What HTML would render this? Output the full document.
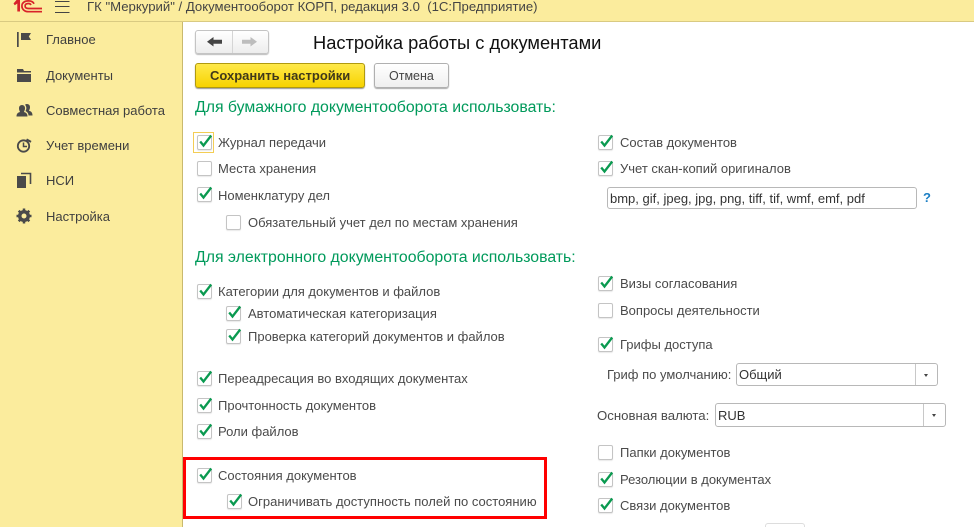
<!DOCTYPE html>
<html lang="ru"><head><meta charset="utf-8"><title>Настройка работы с документами</title>
<style>
html,body{margin:0;padding:0;width:974px;height:527px;overflow:hidden;background:#fff}
body{position:relative;font-family:"Liberation Sans",Arial,sans-serif;font-size:13px;color:#4a4a4a}
div,span,svg{position:absolute}
.t{line-height:16px;white-space:nowrap}
.n{left:46px;color:#3f3f3f;font-size:13px}
.h{left:195px;color:#009a5b;font-size:15.84px;line-height:18px;white-space:nowrap}
.c{width:13px;height:13px;border:1px solid #c4c4c4;border-radius:2px;background:#fff;box-shadow:0 1px 1px #e8e8e8}
.c svg{left:0;top:-4px;width:17px;height:17px;overflow:visible}
.f{height:20px;border:1px solid #b8b8b8;border-radius:3px;background:#fff;color:#333;line-height:21px;padding-left:2px;white-space:nowrap;box-sizing:content-box}
.ar{top:0;bottom:0;right:0;width:21px;border-left:1px solid #c8c8c8}
.ar:after{content:"";position:absolute;left:8px;top:10px;border:2.5px solid transparent;border-top:3px solid #444;border-bottom:0}
</style></head><body>
<svg width="0" height="0" style="left:0;top:0"><defs><symbol id="k" viewBox="0 0 17 17"><path d="M2.200 9.500 5.500 13.500 13.200 3.500" fill="none" stroke="#0a9a50" stroke-width="2.300"/></symbol></defs></svg>

<div style="left:0;top:0;width:974px;height:22px;background:#fbec9d;border-bottom:1px solid #d9ca82;box-sizing:border-box"></div>
<div style="left:0;top:22px;width:182px;height:505px;background:#fbec9d;border-right:1px solid #c9b96e"></div>

<svg style="left:13px;top:0" width="30" height="13" viewBox="0 0 30 13"><path d="M0.500 3.500 3.500 0H7V11.500H4.300V3.500L1.800 5.200Z" fill="#d8232a"/><g fill="none" stroke="#d8232a" stroke-width="1.700"><path d="M21 3.800C20 1.500 18 .9 15.500 .9 11.300 .9 8.900 3 8.900 6S11.300 11.700 15.500 11.700H29"/><path d="M18 5C17.500 3.900 16.500 3.500 15.500 3.500 13.300 3.500 12.100 4.500 12.100 6S13.300 8.500 15.500 8.500H29"/></g></svg>
<svg style="left:55px;top:0" width="16" height="14" viewBox="0 0 16 14"><path d="M0 1.500H14.500M0 6.500H14.500M0 12.500H14.500" stroke="#444" stroke-width="1"/></svg>
<div class="t" style="left:87px;top:-1px;font-size:13.17px;color:#444">ГК "Меркурий" / Документооборот КОРП, редакция 3.0 &nbsp;(1С:Предприятие)</div>

<svg style="left:16px;top:32px" width="16" height="16" viewBox="0 0 16 16"><path d="M1 0H2.700V15H1Z" fill="#4a4a4a"/><path d="M5 1H15L12.800 4.500 15 8H5Z" fill="#4a4a4a"/></svg>
<div class="t n" style="top:32px">Главное</div>
<svg style="left:16px;top:67px" width="16" height="16" viewBox="0 0 16 16"><path d="M1 2H7L8 4H15V5.500H1ZM1 7H15V15H1Z" fill="#4a4a4a"/></svg>
<div class="t n" style="top:68px">Документы</div>
<svg style="left:16px;top:102px" width="17" height="16" viewBox="0 0 17 16"><path d="M6 3a3 3 0 0 1 3 3.500c0 1.500-.8 2.500-1 3.500 2 .6 3.500 1.500 3.500 4.500H0.500c0-3 1.500-3.900 3.500-4.500-.3-1-1-2-1-3.500A3 3 0 0 1 6 3Z" fill="#4a4a4a"/><path d="M11 2a3 3 0 0 1 3 3.500c0 1.500-.8 2.500-1 3.300 2 .6 3.500 1.600 3.500 4.700H12.500c0-2-1-3.500-3-4.500.5-1 1-2 .8-3.500-.1-1-.5-2-1.300-2.800.6-.4 1.300-.7 2-.7Z" fill="#4a4a4a"/></svg>
<div class="t n" style="top:103px">Совместная работа</div>
<svg style="left:16px;top:137px" width="17" height="17" viewBox="0 0 17 17"><circle cx="7.500" cy="9" r="5.700" fill="none" stroke="#4a4a4a" stroke-width="1.800"/><path d="M7.500 5.500V9.500H11" fill="none" stroke="#4a4a4a" stroke-width="1.500"/><path d="M11 1.500 15.500 4 14.500 5.800 10 3.300Z" fill="#4a4a4a"/></svg>
<div class="t n" style="top:138px">Учет времени</div>
<svg style="left:16px;top:172px" width="16" height="17" viewBox="0 0 16 17"><path d="M1 4H10V16H1Z" fill="#4a4a4a"/><path d="M5 1.500H14.500V12" fill="none" stroke="#4a4a4a" stroke-width="1.600"/></svg>
<div class="t n" style="top:173px">НСИ</div>
<svg style="left:16px;top:208px" width="16" height="16" viewBox="0 0 16 16"><circle cx="8" cy="8" r="4.500" fill="none" stroke="#4a4a4a" stroke-width="3"/><path d="M8 0.500V15.500M0.500 8H15.500M2.700 2.700 13.300 13.300M13.300 2.700 2.700 13.300" stroke="#4a4a4a" stroke-width="2.500"/><circle cx="8" cy="8" r="2.500" fill="#fbec9d"/></svg>
<div class="t n" style="top:209px">Настройка</div>

<div style="left:195px;top:30px;width:72px;height:22px;border:1px solid #c4c4c4;border-radius:3px;background:linear-gradient(#fff,#ededed);box-shadow:0 1px 1px #bbb"></div>
<div style="left:232px;top:31px;width:1px;height:22px;background:#d5d5d5"></div>
<svg style="left:207px;top:36px" width="16" height="12" viewBox="0 0 16 12"><path d="M0 5.700 6.500 1V3.700H15V7.700H6.500V10.500Z" fill="#444"/></svg>
<svg style="left:242px;top:36px" width="16" height="12" viewBox="0 0 16 12"><path d="M15 5.700 8.500 1V3.700H0V7.700H8.500V10.500Z" fill="#bdbdbd"/></svg>
<div class="t" style="left:313px;top:32px;font-size:18.3px;line-height:21px;color:#111">Настройка работы с документами</div>

<div style="left:195px;top:63px;width:168px;height:23px;border:1px solid #b09a10;border-radius:3px;background:linear-gradient(#ffe94a,#f7d300);box-shadow:0 1px 1px #999"></div>
<div class="t" style="left:210px;top:68px;font-weight:bold;font-size:13px;color:#40391a">Сохранить настройки</div>
<div style="left:374px;top:63px;width:73px;height:23px;border:1px solid #b0b0b0;border-radius:3px;background:linear-gradient(#fff,#efefef);box-shadow:0 1px 1px #aaa"></div>
<div class="t" style="left:389px;top:68px;font-size:12.5px;color:#444">Отмена</div>

<div class="h" style="top:99px">Для бумажного документооборота использовать:</div>
<div class="h" style="top:249px">Для электронного документооборота использовать:</div>

<div style="left:193px;top:132px;width:19px;height:19px;border:1px solid #f3cd55"></div>
<div class="c" style="left:197px;top:135px"><svg><use href="#k"/></svg></div><div class="t" style="left:218px;top:135px">Журнал передачи</div>
<div class="c" style="left:197px;top:161px"></div><div class="t" style="left:218px;top:161px">Места хранения</div>
<div class="c" style="left:197px;top:187px"><svg><use href="#k"/></svg></div><div class="t" style="left:218px;top:188px">Номенклатуру дел</div>
<div class="c" style="left:226px;top:215px"></div><div class="t" style="left:248px;top:215px">Обязательный учет дел по местам хранения</div>

<div class="c" style="left:197px;top:284px"><svg><use href="#k"/></svg></div><div class="t" style="left:218px;top:284px">Категории для документов и файлов</div>
<div class="c" style="left:226px;top:306px"><svg><use href="#k"/></svg></div><div class="t" style="left:248px;top:306px">Автоматическая категоризация</div>
<div class="c" style="left:226px;top:329px"><svg><use href="#k"/></svg></div><div class="t" style="left:248px;top:329px">Проверка категорий документов и файлов</div>
<div class="c" style="left:197px;top:371px"><svg><use href="#k"/></svg></div><div class="t" style="left:218px;top:371px">Переадресация во входящих документах</div>
<div class="c" style="left:197px;top:398px"><svg><use href="#k"/></svg></div><div class="t" style="left:218px;top:398px">Прочтонность документов</div>
<div class="c" style="left:197px;top:424px"><svg><use href="#k"/></svg></div><div class="t" style="left:218px;top:424px">Роли файлов</div>
<div class="c" style="left:197px;top:468px"><svg><use href="#k"/></svg></div><div class="t" style="left:218px;top:468px">Состояния документов</div>
<div class="c" style="left:227px;top:494px"><svg><use href="#k"/></svg></div><div class="t" style="left:248px;top:494px;font-size:13.03px">Ограничивать доступность полей по состоянию</div>

<div style="left:183px;top:457px;width:358px;height:56px;border:3px solid #f00"></div>

<div class="c" style="left:598px;top:135px"><svg><use href="#k"/></svg></div><div class="t" style="left:620px;top:135px">Состав документов</div>
<div class="c" style="left:598px;top:161px"><svg><use href="#k"/></svg></div><div class="t" style="left:620px;top:161px">Учет скан-копий оригиналов</div>
<div class="f" style="left:607px;top:187px;width:306px">bmp, gif, jpeg, jpg, png, tiff, tif, wmf, emf, pdf</div>
<div class="t" style="left:923px;top:190px;font-weight:bold;color:#1c7fc4">?</div>

<div class="c" style="left:598px;top:276px"><svg><use href="#k"/></svg></div><div class="t" style="left:620px;top:276px">Визы согласования</div>
<div class="c" style="left:598px;top:303px"></div><div class="t" style="left:620px;top:303px">Вопросы деятельности</div>
<div class="c" style="left:598px;top:337px"><svg><use href="#k"/></svg></div><div class="t" style="left:620px;top:337px">Грифы доступа</div>
<div class="t" style="left:607px;top:367px">Гриф по умолчанию:</div>
<div class="f" style="left:736px;top:363px;width:198px;height:21px;line-height:22px">Общий<span class="ar"></span></div>
<div class="t" style="left:597px;top:408px;font-size:13.2px">Основная валюта:</div>
<div class="f" style="left:715px;top:403px;width:227px;height:22px;line-height:24px">RUB<span class="ar"></span></div>
<div class="c" style="left:598px;top:445px"></div><div class="t" style="left:620px;top:445px">Папки документов</div>
<div class="c" style="left:598px;top:472px"><svg><use href="#k"/></svg></div><div class="t" style="left:620px;top:472px">Резолюции в документах</div>
<div class="c" style="left:598px;top:498px"><svg><use href="#k"/></svg></div><div class="t" style="left:620px;top:498px">Связи документов</div>
<div style="left:765px;top:523px;width:38px;height:6px;border:1px solid #ddd;border-radius:3px"></div>
</body></html>
